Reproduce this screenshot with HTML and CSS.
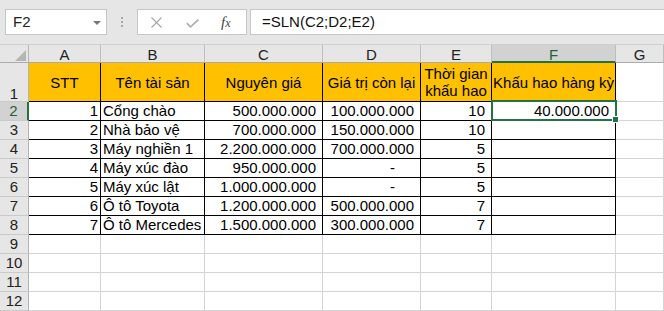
FILE: index.html
```html
<!DOCTYPE html>
<html lang="vi">
<head>
<meta charset="utf-8">
<link rel="stylesheet" href="styles.css">
</head>
<body>
<div class="topbar">
  <div class="namebox"><span>F2</span><span class="caret"></span></div>
  <div class="dots"><i></i><i></i><i></i></div>
  <div class="fxbox">
    <svg class="ico-x" width="11" height="11" viewBox="0 0 11 11"><path d="M0.5 0.5L10.5 10.5M10.5 0.5L0.5 10.5" stroke="#a6a6a6" stroke-width="1.1" fill="none"/></svg>
    <svg class="ico-ok" width="13" height="9" viewBox="0 0 13 9"><path d="M0.8 4.2L4.6 7.8L12.4 0.6" stroke="#b0b0b0" stroke-width="1.8" fill="none"/></svg>
    <span class="fx">f<small>x</small></span>
  </div>
  <div class="formula">=SLN(C2;D2;E2)</div>
</div>
<div class="sheet">
  <div class="corner"><svg width="11" height="11" viewBox="0 0 11 11"><polygon points="11,0 11,11 0,11" fill="#b5b5b5"/></svg></div>
  <div class="ch">A</div><div class="ch">B</div><div class="ch">C</div><div class="ch">D</div><div class="ch">E</div><div class="ch sel">F</div><div class="ch">G</div>

  <div class="rh r1">1</div>
  <div class="c t y hd">STT</div><div class="c t y hd">Tên tài sản</div><div class="c t y hd">Nguyên giá</div><div class="c t y hd">Giá trị còn lại</div><div class="c t y hd">Thời gian<br>khấu hao</div><div class="c t y hd">Khấu hao hàng kỳ</div><div class="c"></div>

  <div class="rh sel">2</div>
  <div class="c t n a">1</div><div class="c t">Cổng chào</div><div class="c t n">500.000.000</div><div class="c t n">100.000.000</div><div class="c t n">10</div><div class="c t n">40.000.000</div><div class="c"></div>

  <div class="rh">3</div>
  <div class="c t n a">2</div><div class="c t">Nhà bảo vệ</div><div class="c t n">700.000.000</div><div class="c t n">150.000.000</div><div class="c t n">10</div><div class="c t n"></div><div class="c"></div>

  <div class="rh">4</div>
  <div class="c t n a">3</div><div class="c t">Máy nghiền 1</div><div class="c t n">2.200.000.000</div><div class="c t n">700.000.000</div><div class="c t n">5</div><div class="c t n"></div><div class="c"></div>

  <div class="rh">5</div>
  <div class="c t n a">4</div><div class="c t">Máy xúc đào</div><div class="c t n">950.000.000</div><div class="c t n dash">-</div><div class="c t n">5</div><div class="c t n"></div><div class="c"></div>

  <div class="rh">6</div>
  <div class="c t n a">5</div><div class="c t">Máy xúc lật</div><div class="c t n">1.000.000.000</div><div class="c t n dash">-</div><div class="c t n">5</div><div class="c t n"></div><div class="c"></div>

  <div class="rh">7</div>
  <div class="c t n a">6</div><div class="c t">Ô tô Toyota</div><div class="c t n">1.200.000.000</div><div class="c t n">500.000.000</div><div class="c t n">7</div><div class="c t n"></div><div class="c"></div>

  <div class="rh">8</div>
  <div class="c t n a">7</div><div class="c t">Ô tô Mercedes</div><div class="c t n">1.500.000.000</div><div class="c t n">300.000.000</div><div class="c t n">7</div><div class="c t n"></div><div class="c"></div>

  <div class="rh">9</div>
  <div class="c"></div><div class="c"></div><div class="c"></div><div class="c"></div><div class="c"></div><div class="c"></div><div class="c"></div>
  <div class="rh">10</div>
  <div class="c"></div><div class="c"></div><div class="c"></div><div class="c"></div><div class="c"></div><div class="c"></div><div class="c"></div>
  <div class="rh">11</div>
  <div class="c"></div><div class="c"></div><div class="c"></div><div class="c"></div><div class="c"></div><div class="c"></div><div class="c"></div>
  <div class="rh">12</div>
  <div class="c"></div><div class="c"></div><div class="c"></div><div class="c"></div><div class="c"></div><div class="c"></div><div class="c"></div>

  <div class="selbox"></div>
  <div class="handle"></div>
</div>
</body>
</html>
```

FILE: styles.css
```css
html, body {
  margin: 0;
  padding: 0;
}
body {
  width: 664px;
  height: 311px;
  overflow: hidden;
  background: #ffffff;
  font-family: "Liberation Sans", Arial, sans-serif;
  font-size: 15px;
  color: #000;
}

/* ---------- formula bar ---------- */
.topbar {
  height: 45px;
  box-sizing: border-box;
  background: #e6e6e6;
  border-bottom: 1px solid #cfcfcf;
  display: flex;
  align-items: flex-start;
  padding-top: 9px;
}
.namebox {
  margin-left: 5px;
  width: 102px;
  height: 26px;
  box-sizing: border-box;
  background: #fff;
  border: 1px solid #c6c6c6;
  display: flex;
  align-items: center;
  justify-content: space-between;
  padding: 0 5px 0 7px;
  line-height: 24px;
  color: #222;
}
.caret {
  width: 0;
  height: 0;
  border-left: 4px solid transparent;
  border-right: 4px solid transparent;
  border-top: 4px solid #777;
  margin-top: 1px;
}
.dots {
  margin-left: 14px;
  margin-top: 8px;
  display: flex;
  flex-direction: column;
  gap: 2px;
}
.dots i {
  display: block;
  width: 2px;
  height: 2px;
  background: #a8a8a8;
}
.fxbox {
  margin-left: 14px;
  width: 110px;
  height: 26px;
  box-sizing: border-box;
  background: #fff;
  border: 1px solid #c6c6c6;
  display: flex;
  align-items: center;
  padding-left: 13px;
}
.ico-x {
  margin-top: 1px;
}
.ico-ok {
  margin-left: 24px;
  margin-top: 2px;
}
.fx {
  margin-left: 22px;
  font-family: "Liberation Serif", "Times New Roman", serif;
  font-style: italic;
  font-size: 15px;
  color: #444;
  line-height: 24px;
}
.fx small {
  font-size: 12px;
}
.formula {
  margin-left: 3px;
  flex: 1;
  height: 26px;
  box-sizing: border-box;
  background: #fff;
  border: 1px solid #c6c6c6;
  border-right: none;
  padding-left: 11px;
  line-height: 24px;
  color: #111;
}

/* ---------- sheet grid ---------- */
.sheet {
  position: relative;
  display: grid;
  grid-template-columns: 29px 72px 104px 118px 98px 71px 124px 1fr;
  grid-template-rows: 18px 39px repeat(11, 19px);
}
.sheet > div {
  box-sizing: border-box;
  overflow: hidden;
  white-space: nowrap;
}
.corner {
  background: #e6e6e6;
  border-right: 1px solid #b4b4b4;
  border-bottom: 1px solid #ababab;
  display: flex;
  justify-content: flex-end;
  align-items: flex-end;
  padding: 0 2px 1px 0;
}
.corner svg {
  display: block;
}
.ch {
  background: #e6e6e6;
  border-right: 1px solid #bdbdbd;
  border-bottom: 1px solid #ababab;
  text-align: center;
  line-height: 17px;
  padding-top: 1px;
  color: #222;
}
.ch.sel {
  background: #d2d2d2;
  color: #1f5f3b;
  border-bottom: 2px solid #217346;
}
.rh {
  background: #e6e6e6;
  border-right: 1px solid #b4b4b4;
  border-bottom: 1px solid #cacaca;
  text-align: center;
  line-height: 18px;
  color: #222;
}
.rh.r1 {
  padding-top: 23px;
  line-height: 15px;
}
.rh.sel {
  background: #d2d2d2;
  color: #1f5f3b;
  border-right: 2px solid #217346;
}
.c {
  border-right: 1px solid #d4d4d4;
  border-bottom: 1px solid #d4d4d4;
  line-height: 18px;
  padding-left: 2px;
}
.c.t {
  border-right-color: #000;
  border-bottom-color: #000;
}
.c.y {
  background: #ffc000;
}
.c.hd {
  display: flex;
  align-items: center;
  justify-content: center;
  text-align: center;
  line-height: 17px;
  padding: 0;
  white-space: normal;
}
.c.n {
  text-align: right;
  padding-left: 0;
  padding-right: 6px;
}
.c.n.a {
  padding-right: 2px;
}
.c.n.dash {
  padding-right: 25px;
}

/* ---------- selection overlay ---------- */
.selbox {
  position: absolute;
  left: 491px;
  top: 55px;
  width: 126px;
  height: 21px;
  border: 2px solid #217346;
}
.handle {
  position: absolute;
  left: 612px;
  top: 71px;
  width: 5px;
  height: 5px;
  background: #217346;
  border: 1px solid #ffffff;
  box-sizing: content-box !important;
}
```
